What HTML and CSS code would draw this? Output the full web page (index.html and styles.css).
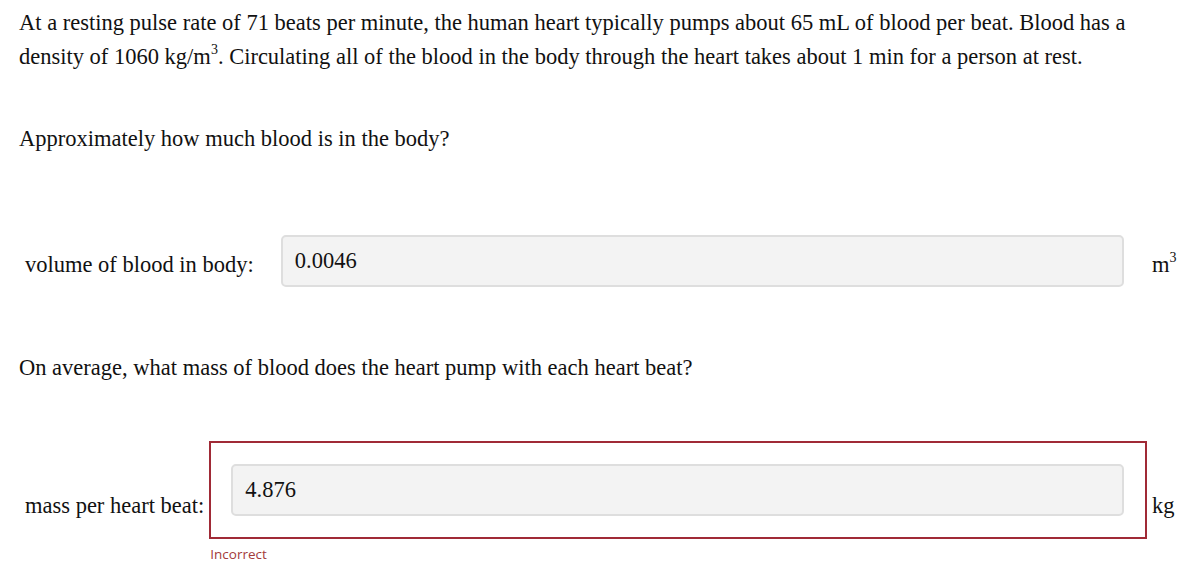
FILE: index.html
```html
<!DOCTYPE html>
<html lang="en">
<head>
    <meta charset="UTF-8">
    <title>Blood Volume Question</title>
    <link rel="stylesheet" href="styles.css">
</head>
<body>
    <div class="question">
        <p class="intro">At a resting pulse rate of 71 beats per minute, the human heart typically pumps about 65 mL of blood per beat. Blood has a density of 1060 kg/m<sup>3</sup>. Circulating all of the blood in the body through the heart takes about 1 min for a person at rest.</p>

        <p class="prompt">Approximately how much blood is in the body?</p>

        <!-- Part 1 -->
        <div class="answer-row">
            <label class="answer-label" for="volume">volume of blood in body:</label>
            <div class="answer-col">
                <div class="answer-box">
                    <input type="text" id="volume" value="0.0046">
                </div>
            </div>
            <span class="unit">m<sup>3</sup></span>
        </div>

        <p class="prompt second">On average, what mass of blood does the heart pump with each heart beat?</p>

        <!-- Part 2 -->
        <div class="answer-row">
            <label class="answer-label" for="mass">mass per heart beat:</label>
            <div class="answer-col">
                <div class="answer-box incorrect">
                    <input type="text" id="mass" value="4.876">
                </div>
                <div class="feedback">Incorrect</div>
            </div>
            <span class="unit">kg</span>
        </div>
    </div>
</body>
</html>
```

FILE: styles.css
```css
body {
    margin: 0;
    padding: 6px 6px 6px 19px;
    font-family: "Liberation Serif", "Times New Roman", serif;
    font-size: 22.5px;
    color: #111;
    background: #fff;
}
p {
    margin: 0;
    line-height: 34px;
}
sup {
    font-size: 14px;
    line-height: 0;
    vertical-align: 10px;
}
.prompt {
    margin-top: 48px;
}
.prompt.second {
    margin-top: 41px;
}
.answer-row {
    display: flex;
    align-items: center;
    margin-top: 56px;
}
.answer-label {
    padding-left: 6px;
    margin-right: 5px;
    position: relative;
    top: 4px;
    white-space: nowrap;
}
.answer-col {
    flex: 1;
}
.answer-box {
    border: 2px solid transparent;
    padding: 21px 21px 21px 20px;
}
.answer-box.incorrect {
    border-color: #a02a36;
}
.answer-box input {
    display: block;
    width: 100%;
    box-sizing: border-box;
    height: 52px;
    padding: 0 12px 1px;
    border: 2px solid #dedede;
    border-radius: 5px;
    background: #f3f3f3;
    font-family: "Liberation Serif", "Times New Roman", serif;
    font-size: 22.5px;
    color: #111;
}
.feedback {
    font-family: "Open Sans", "Noto Sans", sans-serif;
    font-size: 13.5px;
    color: #a33a3a;
    margin-top: 6px;
    padding-left: 1px;
    line-height: 18px;
}
.unit {
    margin-left: 5px;
    width: 29px;
    position: relative;
    top: 4px;
}
```
